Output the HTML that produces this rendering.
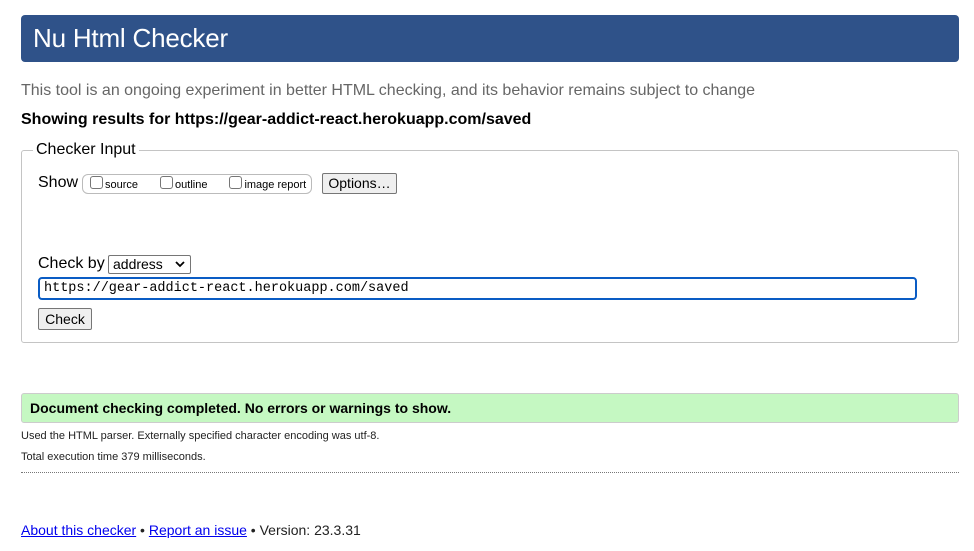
<!DOCTYPE html>
<html><head><meta charset="utf-8"><style>
*{margin:0;padding:0;box-sizing:border-box}
body{width:974px;height:551px;background:#fff;font-family:"Liberation Sans",Arial,sans-serif;color:#000;position:relative;overflow:hidden}
.a{position:absolute;white-space:nowrap}
#hdr{left:21px;top:15px;width:938px;height:47px;background:#2f5289;border-radius:4px}
#hdr span{position:absolute;left:12px;top:8px;color:#fff;font-size:26px;letter-spacing:-0.2px}
#fs{left:21px;top:150px;width:938px;height:193px;border:1px solid #c4c4c4;border-radius:3px}
.btn{position:absolute;background:#efefef;border:1px solid #767676;border-radius:2px;font-size:14px;text-align:center}
.cb{display:inline-block;width:13px;height:13px;border:1px solid #767676;border-radius:3px;vertical-align:-1px;margin-right:2px;background:#fff}
</style></head><body>
<div class="a" id="hdr"><span>Nu Html Checker</span></div>
<div class="a" style="left:21px;top:82px;font-size:16px;color:#666">This tool is an ongoing experiment in better HTML checking, and its behavior remains subject to change</div>
<div class="a" style="left:21px;top:111px;font-size:16px;font-weight:bold">Showing results for https://gear-addict-react.herokuapp.com/saved</div>
<div class="a" id="fs"></div>
<div class="a" style="left:33px;top:141px;background:#fff;padding:0 3px;font-size:16px">Checker Input</div>
<div class="a" style="left:38px;top:174px;font-size:16px">Show</div>
<div class="a" style="left:82px;top:174px;width:230px;height:20px;border:1px solid #bbb;border-radius:6px;font-size:11px;padding:1px 0 0 7px"><span class="cb"></span>source<span style="display:inline-block;width:22px"></span><span class="cb"></span>outline<span style="display:inline-block;width:22px"></span><span class="cb"></span>image report</div>
<div class="btn" style="left:322px;top:173px;width:75px;height:21px;line-height:19px">Options…</div>
<div class="a" style="left:38px;top:255px;font-size:16px">Check by</div>
<div class="a" style="left:108px;top:255px;width:83px;height:19px;border:1px solid #767676;border-radius:2px;font-size:14px;padding-left:4px;line-height:17px">address</div>
<svg class="a" style="left:175px;top:261px" width="10" height="7"><path d="M1 1L5 5L9 1" stroke="#000" stroke-width="1.8" fill="none"/></svg>
<div class="a" style="left:38px;top:277px;width:879px;height:23px;border:2px solid #0a5cc4;border-radius:4px;font-family:'Liberation Mono',monospace;font-size:13.5px;padding-left:4px;line-height:20px">https://gear-addict-react.herokuapp.com/saved</div>
<div class="btn" style="left:38px;top:308px;width:54px;height:22px;line-height:20px">Check</div>
<div class="a" style="left:21px;top:393px;width:938px;height:30px;background:#c5f8c2;border:1px solid #ccc;border-radius:3px;font-size:14px;font-weight:bold;padding:6px 0 0 8px">Document checking completed. No errors or warnings to show.</div>
<div class="a" style="left:21px;top:430px;font-size:11px;color:#222">Used the HTML parser. Externally specified character encoding was utf-8.</div>
<div class="a" style="left:21px;top:451px;font-size:11px;color:#222">Total execution time 379 milliseconds.</div>
<div class="a" style="left:21px;top:472px;width:938px;border-top:1px dotted #777"></div>
<div class="a" style="left:21px;top:522px;font-size:14px;color:#222"><span style="color:#00e;text-decoration:underline">About this checker</span> • <span style="color:#00e;text-decoration:underline">Report an issue</span> • Version: 23.3.31</div>
</body></html>
